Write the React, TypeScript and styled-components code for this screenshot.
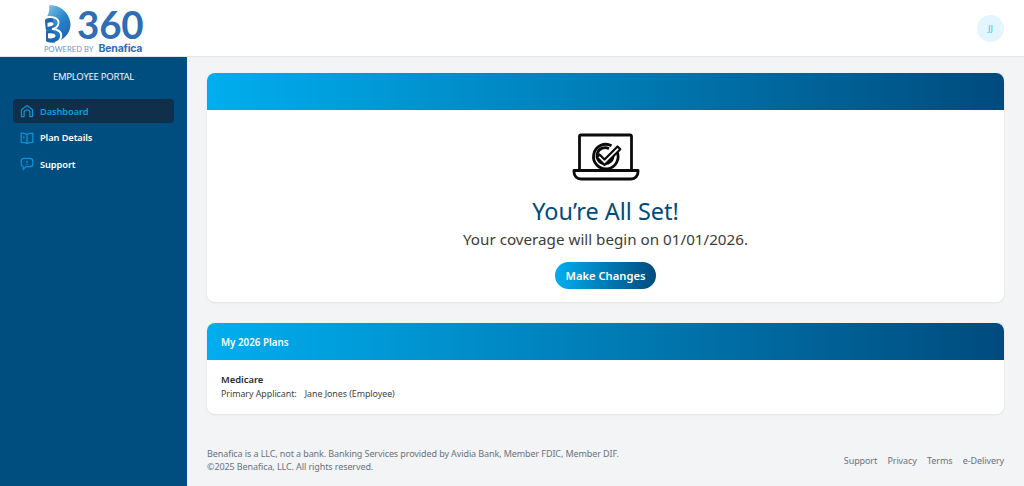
import React from 'react';
import styled, { createGlobalStyle } from 'styled-components';

const GlobalStyle = createGlobalStyle`
  html, body {
    margin: 0;
    padding: 0;
    height: 100%;
    background: #f2f4f6;
    font-family: "Noto Sans", "Open Sans", "Liberation Sans", sans-serif;
  }
  * {
    box-sizing: border-box;
  }
`;

const Page = styled.div`
  width: 1024px;
  height: 486px;
  display: flex;
  flex-direction: column;
  overflow: hidden;
`;

const TopBar = styled.header`
  height: 57px;
  flex: none;
  background: #fff;
  border-bottom: 1px solid #e2e4e6;
  display: flex;
  align-items: center;
  justify-content: space-between;
  padding: 0 20px 0 44px;
`;

const Logo = styled.div`
  display: flex;
  flex-direction: column;
  width: 100px;
  margin-top: 3px;
`;

const LogoTop = styled.div`
  display: flex;
  align-items: flex-start;
  height: 38px;
`;

const LogoNumber = styled.span`
  font-family: Lato, Inter, sans-serif;
  font-weight: 700;
  font-size: 38.5px;
  line-height: 38px;
  letter-spacing: -0.2px;
  color: #2f6db5;
  margin-left: 6px;
`;

const LogoSub = styled.div`
  display: flex;
  align-items: baseline;
  gap: 5px;
  height: 12px;
  line-height: 12px;
  white-space: nowrap;
`;

const Powered = styled.span`
  font-family: Lato, sans-serif;
  font-size: 7.5px;
  letter-spacing: 0.1px;
  color: #6a93c6;
`;

const Brand = styled.span`
  font-family: Inter, sans-serif;
  font-weight: 700;
  font-size: 10.5px;
  letter-spacing: -0.2px;
  color: #2f6db5;
`;

const Avatar = styled.div`
  width: 27px;
  height: 27px;
  border-radius: 50%;
  background: #e3f5fd;
  color: #45b8f0;
  font-size: 9px;
  display: flex;
  align-items: center;
  justify-content: center;
`;

const Body = styled.div`
  flex: 1;
  display: flex;
  min-height: 0;
`;

const Sidebar = styled.nav`
  width: 187px;
  flex: none;
  background: #004d80;
  padding: 13px 13px 0 13px;
`;

const PortalTitle = styled.div`
  color: #f2f6fa;
  font-size: 9.5px;
  letter-spacing: -0.25px;
  line-height: 14px;
  text-align: center;
  margin-bottom: 15px;
`;

const NavList = styled.div`
  display: flex;
  flex-direction: column;
  gap: 2.5px;
`;

const NavItem = styled.a<{ $active?: boolean }>`
  height: 24px;
  border-radius: 4px;
  display: flex;
  align-items: center;
  gap: 6px;
  padding-left: 7px;
  font-size: 9.3px;
  letter-spacing: -0.1px;
  font-weight: 600;
  color: ${({ $active }) => ($active ? '#0a9fe0' : '#ffffff')};
  background: ${({ $active }) => ($active ? '#0f2f4a' : 'transparent')};
`;

const Main = styled.main`
  flex: 1;
  min-width: 0;
  padding: 16px 20px 0 20px;
  display: flex;
  flex-direction: column;
`;

const Card = styled.section`
  background: #fff;
  border-radius: 8px;
  overflow: hidden;
  box-shadow: 0 1px 3px rgba(0, 0, 0, 0.08);
`;

const CardHeader = styled.div`
  height: 37px;
  background: linear-gradient(90deg, #00aeef 0%, #004b7d 100%);
  color: #fff;
  font-size: 9.8px;
  font-weight: 600;
  display: flex;
  align-items: center;
  padding: 1px 0 0 14px;
`;

const Hero = styled.div`
  height: 192px;
  display: flex;
  flex-direction: column;
  align-items: center;
  padding-top: 23px;
`;

const HeroTitle = styled.h1`
  margin: 13px 0 0;
  font-size: 23.4px;
  line-height: 34px;
  font-weight: 400;
  color: #004b7d;
`;

const HeroText = styled.p`
  margin: 0;
  font-size: 15.2px;
  line-height: 22px;
  color: #3c3c3c;
`;

const ActionButton = styled.button`
  margin-top: 12px;
  width: 101px;
  height: 27px;
  border: none;
  border-radius: 14px;
  background: linear-gradient(90deg, #00aeef 0%, #004b7d 100%);
  color: #fff;
  font-family: inherit;
  font-size: 11.2px;
  font-weight: 600;
  padding: 0;
`;

const PlansCard = styled(Card)`
  margin-top: 21px;
`;

const PlanBody = styled.div`
  height: 54px;
  padding: 13px 14px 0;
`;

const PlanName = styled.div`
  font-size: 9.4px;
  font-weight: 600;
  line-height: 14px;
  color: #2b2b2b;
`;

const PlanLine = styled.div`
  display: flex;
  gap: 8px;
  font-size: 8.9px;
  letter-spacing: -0.05px;
  line-height: 14px;
  color: #3f3f3f;
`;

const Footer = styled.footer`
  margin-top: 33px;
  display: flex;
  justify-content: space-between;
  align-items: center;
  color: #6b7280;
  font-size: 9px;
  letter-spacing: -0.1px;
  line-height: 13px;
`;

const FooterLinks = styled.div`
  display: flex;
  gap: 10.300px;
`;

const logoMark = (
  <svg width="27" height="38" viewBox="0 0 27 38">
    <defs>
      <linearGradient id="markFill" x1="0.1" y1="0" x2="0.8" y2="1">
        <stop offset="0" stopColor="#7cc4e4" />
        <stop offset="0.5" stopColor="#2a86cc" />
        <stop offset="1" stopColor="#1c5fae" />
      </linearGradient>
    </defs>
    <path
      d="M5 0.500 C15 -1 26 8 26.500 19 C26.800 27 21 34 13 37 C10 37.800 5 37.500 2 36 L2 26 L1 15 C4 11 6 6 5 0.500 Z"
      fill="url(#markFill)"
    />
    <path d="M1 15 C4 13 7 12 9 13 L10 24 L2 25 Z" fill="#1f66b0" />
    <path d="M2 26 L9 25 L15 36.300 C10 38 5 38 2 36 Z" fill="#1f66b0" />
    <path
      d="M-1 13.500 C6 10.500 15 12 14.500 18 C14 22 11 23.500 8 24 C14 24 18 27 17 32 C16.500 35 14 37 11 38"
      fill="none"
      stroke="#fff"
      strokeWidth="2"
    />
    <path d="M3.500 18 C6 17 9 17 9.500 18.800 C10 20.800 6 21.800 3.500 21.800 Z" fill="#fff" />
    <path d="M4 28.500 C7 27.800 11 28 11.500 30.500 C12 32.800 8 33.800 4 33.300 Z" fill="#fff" />
  </svg>
);

const HomeIcon = () => (
  <svg width="14" height="14" viewBox="0 0 24 24" fill="none" stroke="#0a93d6" strokeWidth="2.200" strokeLinejoin="round">
    <path d="M2.500 21.500V10L12 2.500 21.500 10v11.500H17V15a5 5 0 0 0-10 0v6.500H2.500Z" />
  </svg>
);

const BookIcon = () => (
  <svg width="14" height="14" viewBox="0 0 24 24" fill="none" stroke="#0a93d6" strokeWidth="2.200" strokeLinejoin="round">
    <path d="M12 6C10 4 6 3.500 2 3.500V19.500c4 0 8 .5 10 2 2-1.500 6-2 10-2V3.500C18 3.500 14 4 12 6Z" />
    <path d="M12 6v15.500" />
    <path d="M6.500 9.500v3.500" />
  </svg>
);

const SupportIcon = () => (
  <svg width="14" height="14" viewBox="0 0 24 24" fill="none" stroke="#0a93d6" strokeWidth="2.200" strokeLinejoin="round">
    <path d="M7 2.500h10a5 5 0 0 1 5 5v4a5 5 0 0 1-5 5h-7l-4.500 5v-5.200A5 5 0 0 1 2 11.500v-4a5 5 0 0 1 5-5Z" />
    <path d="M12 6.500v4" />
    <path d="M12 12.500v1" />
  </svg>
);

const LaptopIcon = () => (
  <svg width="68" height="48" viewBox="0 0 68 48" fill="none" stroke="#0b0b0b" strokeWidth="2.800">
    <path d="M7.500 37V3.500a1.500 1.500 0 0 1 1.500-1.500h49a1.500 1.500 0 0 1 1.500 1.500V37" />
    <path d="M2 37.500h64v1.500c0 4-3 7-7 7H9c-4 0-7-3-7-7v-1.500Z" strokeLinejoin="round" />
    <path d="M45 18.500a12.300 12.300 0 1 1-5.500-5.800" />
    <path d="M41 22a8 8 0 1 1-4-6.300" />
    <path d="M27.500 21.500l5 5L45.500 13.500l2.800 2.800-15.800 15.700-7.600-7.600Z" fill="#fff" strokeLinejoin="round" strokeWidth="2.200" />
  </svg>
);

export default function App() {
  return (
    <Page>
      <GlobalStyle />
      <TopBar>
        <Logo>
          <LogoTop>
            {logoMark}
            <LogoNumber>360</LogoNumber>
          </LogoTop>
          <LogoSub>
            <Powered>POWERED BY</Powered>
            <Brand>Benafica</Brand>
          </LogoSub>
        </Logo>
        <Avatar>JJ</Avatar>
      </TopBar>
      <Body>
        <Sidebar>
          <PortalTitle>EMPLOYEE PORTAL</PortalTitle>
          <NavList>
            <NavItem $active>
              <HomeIcon />
              Dashboard
            </NavItem>
            <NavItem>
              <BookIcon />
              Plan Details
            </NavItem>
            <NavItem>
              <SupportIcon />
              Support
            </NavItem>
          </NavList>
        </Sidebar>
        <Main>
          <Card>
            <CardHeader />
            <Hero>
              <LaptopIcon />
              <HeroTitle>You’re All Set!</HeroTitle>
              <HeroText>Your coverage will begin on 01/01/2026.</HeroText>
              <ActionButton>Make Changes</ActionButton>
            </Hero>
          </Card>
          <PlansCard>
            <CardHeader>My 2026 Plans</CardHeader>
            <PlanBody>
              <PlanName>Medicare</PlanName>
              <PlanLine>
                <span>Primary Applicant:</span>
                <span>Jane Jones (Employee)</span>
              </PlanLine>
            </PlanBody>
          </PlansCard>
          <Footer>
            <div>
              Benafica is a LLC, not a bank. Banking Services provided by Avidia Bank, Member FDIC, Member DIF.
              <br />
              ©2025 Benafica, LLC. All rights reserved.
            </div>
            <FooterLinks>
              <span>Support</span>
              <span>Privacy</span>
              <span>Terms</span>
              <span>e-Delivery</span>
            </FooterLinks>
          </Footer>
        </Main>
      </Body>
    </Page>
  );
}
